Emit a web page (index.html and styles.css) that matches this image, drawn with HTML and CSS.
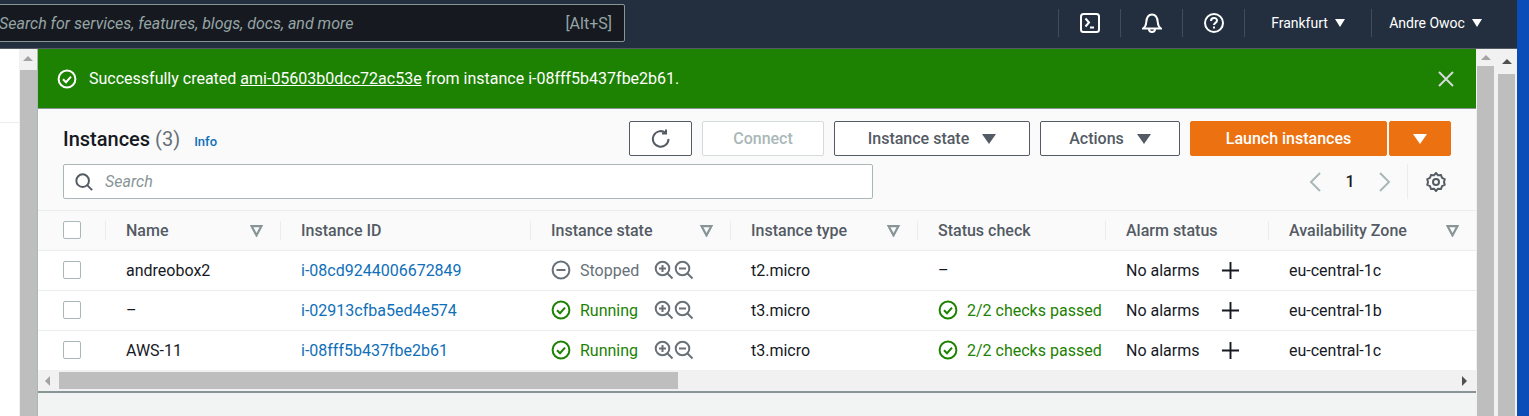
FILE: index.html
```html
<!DOCTYPE html>
<html lang="en">
<head>
    <meta charset="UTF-8">
    <title>Instances</title>
    <link rel="stylesheet" href="styles.css">
</head>
<body>
    <svg class="sprite" width="0" height="0">
        <symbol id="i-check" viewBox="0 0 20 20"><circle cx="10" cy="10" r="8.4" fill="none" stroke="currentColor" stroke-width="2"/><path d="M6 10.3l3 2.9 5-5.6" fill="none" stroke="currentColor" stroke-width="2"/></symbol>
        <symbol id="i-stop" viewBox="0 0 20 20"><circle cx="10" cy="10" r="8.4" fill="none" stroke="currentColor" stroke-width="2"/><path d="M5.5 10h9" fill="none" stroke="currentColor" stroke-width="2"/></symbol>
        <symbol id="i-zoomin" viewBox="0 0 20 20"><circle cx="8.5" cy="8.5" r="6.8" fill="none" stroke="currentColor" stroke-width="2"/><path d="M13.5 13.5l5 5M5 8.5h7M8.5 5v7" fill="none" stroke="currentColor" stroke-width="2"/></symbol>
        <symbol id="i-zoomout" viewBox="0 0 20 20"><circle cx="8.5" cy="8.5" r="6.8" fill="none" stroke="currentColor" stroke-width="2"/><path d="M13.5 13.5l5 5M5 8.5h7" fill="none" stroke="currentColor" stroke-width="2"/></symbol>
        <symbol id="i-plus" viewBox="0 0 20 20"><path d="M10 1v18M1 10h18" fill="none" stroke="currentColor" stroke-width="2"/></symbol>
        <symbol id="i-sort" viewBox="0 0 12 12"><path d="M1.5 2h9L6 10.5z" fill="none" stroke="currentColor" stroke-width="2"/></symbol>
    </svg>

    <div class="app">
        <header class="topbar">
            <div class="global-search">
                <span class="global-search-text">Search for services, features, blogs, docs, and more</span>
                <span class="global-search-key">[Alt+S]</span>
            </div>
            <div class="topbar-item topbar-icon">
                <svg width="20" height="20" viewBox="0 0 20 20" fill="none" stroke="#fff" stroke-width="2"><rect x="1" y="1" width="18" height="18" rx="2.5"/><path d="M5.5 5.5l3.5 4-3.5 4M10 14.500h4"/></svg>
            </div>
            <div class="topbar-item topbar-icon">
                <svg width="20" height="20" viewBox="0 0 20 20" fill="none" stroke="#fff" stroke-width="2"><path d="M1 15.500c2.500-1.500 3-3 3.200-6C4.500 5 6.500 1.500 10 1.500s5.500 3.500 5.800 8c.2 3 .7 4.500 3.200 6z"/><path d="M7 16c0 4 6 4 6 0"/></svg>
            </div>
            <div class="topbar-item topbar-icon">
                <svg width="20" height="20" viewBox="0 0 20 20" fill="none" stroke="#fff" stroke-width="2"><circle cx="10" cy="10" r="9"/><path d="M7 8c0-4 6-4 6-.500 0 2.500-3 2.200-3 4.500"/><path d="M10 13.500v2"/></svg>
            </div>
            <div class="topbar-item topbar-menu region">Frankfurt <span class="caret-small"></span></div>
            <div class="topbar-item topbar-menu user">Andre Owoc <span class="caret-small"></span></div>
        </header>

        <div class="main">
            <nav class="leftnav"><div class="leftnav-line"></div></nav>
            <div class="vscroll vscroll-left"><span class="arrow-up"></span><div class="thumb"></div></div>

            <section class="panel">
                <div class="banner">
                    <svg class="banner-icon"><use href="#i-check"/></svg>
                    <span class="banner-text">Successfully created <a href="#">ami-05603b0dcc72ac53e</a> from instance i-08fff5b437fbe2b61.</span>
                    <svg class="banner-close" viewBox="0 0 16 16" fill="none" stroke="currentColor" stroke-width="2"><path d="M1 1l14 14M15 1L1 15"/></svg>
                </div>

                <div class="toolbar">
                    <div class="toolbar-row">
                        <h1 class="title">Instances <span class="count">(3)</span></h1>
                        <a class="info" href="#">Info</a>
                        <div class="actions">
                            <button class="btn btn-icon">
                                <svg width="20" height="20" viewBox="0 0 20 20" fill="none" stroke="#545b64" stroke-width="2"><path d="M17.500 10a7.800 7.800 0 1 1-3-6.200"/><path d="M15 .500v4h-4"/></svg>
                            </button>
                            <button class="btn btn-disabled">Connect</button>
                            <button class="btn btn-state">Instance state <span class="caret"></span></button>
                            <button class="btn btn-actions">Actions <span class="caret"></span></button>
                            <div class="split">
                                <button class="btn btn-primary">Launch instances</button>
                                <button class="btn btn-primary btn-more"><span class="caret caret-white"></span></button>
                            </div>
                        </div>
                    </div>
                    <div class="toolbar-row">
                        <div class="search">
                            <svg width="18" height="18" viewBox="0 0 20 20" fill="none" stroke="#545b64" stroke-width="2.200"><circle cx="8.500" cy="8.500" r="7"/><path d="M13.500 13.500l5.500 5.500"/></svg>
                            <span class="search-text">Search</span>
                        </div>
                        <div class="pager">
                            <svg class="pager-arrow" viewBox="0 0 14 22" fill="none" stroke="currentColor" stroke-width="2"><path d="M12 2L3 11l9 9"/></svg>
                            <span class="pager-num">1</span>
                            <svg class="pager-arrow" viewBox="0 0 14 22" fill="none" stroke="currentColor" stroke-width="2"><path d="M2 2l9 9-9 9"/></svg>
                            <div class="pager-gear">
                                <svg width="20" height="20" viewBox="0 0 20 20" fill="none" stroke="#545b64" stroke-width="2"><path d="M10 1l2 2.300 3-.3 1 2.800 2.700 1.400-.7 2.800.7 2.800L16 14.200 15 17l-3-.3L10 19l-2-2.300-3 .3-1-2.800-2.700-1.400.7-2.800-.7-2.800L4 5.800 5 3l3 .3z"/><circle cx="10" cy="10" r="3"/></svg>
                            </div>
                        </div>
                    </div>
                </div>

                <table class="instances">
                    <colgroup>
                        <col class="col-check"><col class="col-name"><col class="col-id"><col class="col-state">
                        <col class="col-type"><col class="col-status"><col class="col-alarm"><col class="col-az">
                    </colgroup>
                    <thead>
                        <tr>
                            <th class="cell-check"><span class="checkbox"></span></th>
                            <th><div class="th-inner">Name <svg class="sort"><use href="#i-sort"/></svg></div></th>
                            <th><div class="th-inner">Instance ID</div></th>
                            <th><div class="th-inner">Instance state <svg class="sort"><use href="#i-sort"/></svg></div></th>
                            <th><div class="th-inner">Instance type <svg class="sort"><use href="#i-sort"/></svg></div></th>
                            <th><div class="th-inner">Status check</div></th>
                            <th><div class="th-inner">Alarm status</div></th>
                            <th><div class="th-inner">Availability Zone <svg class="sort"><use href="#i-sort"/></svg></div></th>
                        </tr>
                    </thead>
                    <tbody>
                        <tr>
                            <td class="cell-check"><span class="checkbox"></span></td>
                            <td>andreobox2</td>
                            <td><a href="#">i-08cd9244006672849</a></td>
                            <td><div class="state"><svg class="status-icon stopped"><use href="#i-stop"/></svg><span class="stopped state-label">Stopped</span><svg class="zoom"><use href="#i-zoomin"/></svg><svg class="zoom"><use href="#i-zoomout"/></svg></div></td>
                            <td>t2.micro</td>
                            <td>–</td>
                            <td><div class="alarm">No alarms <svg class="plus"><use href="#i-plus"/></svg></div></td>
                            <td>eu-central-1c</td>
                        </tr>
                        <tr>
                            <td class="cell-check"><span class="checkbox"></span></td>
                            <td>–</td>
                            <td><a href="#">i-02913cfba5ed4e574</a></td>
                            <td><div class="state"><svg class="status-icon ok"><use href="#i-check"/></svg><span class="ok state-label">Running</span><svg class="zoom"><use href="#i-zoomin"/></svg><svg class="zoom"><use href="#i-zoomout"/></svg></div></td>
                            <td>t3.micro</td>
                            <td><div class="check"><svg class="status-icon ok"><use href="#i-check"/></svg><span class="ok">2/2 checks passed</span></div></td>
                            <td><div class="alarm">No alarms <svg class="plus"><use href="#i-plus"/></svg></div></td>
                            <td>eu-central-1b</td>
                        </tr>
                        <tr>
                            <td class="cell-check"><span class="checkbox"></span></td>
                            <td>AWS-11</td>
                            <td><a href="#">i-08fff5b437fbe2b61</a></td>
                            <td><div class="state"><svg class="status-icon ok"><use href="#i-check"/></svg><span class="ok state-label">Running</span><svg class="zoom"><use href="#i-zoomin"/></svg><svg class="zoom"><use href="#i-zoomout"/></svg></div></td>
                            <td>t3.micro</td>
                            <td><div class="check"><svg class="status-icon ok"><use href="#i-check"/></svg><span class="ok">2/2 checks passed</span></div></td>
                            <td><div class="alarm">No alarms <svg class="plus"><use href="#i-plus"/></svg></div></td>
                            <td>eu-central-1c</td>
                        </tr>
                    </tbody>
                </table>

                <div class="hscroll">
                    <span class="arrow-left"></span>
                    <div class="hthumb"></div>
                    <span class="arrow-right"></span>
                </div>
                <div class="panel-foot"></div>
            </section>

            <div class="vscroll vscroll-panel"><span class="arrow-up"></span><div class="thumb"></div></div>
            <div class="vscroll vscroll-page"><span class="arrow-up arrow-dark"></span><div class="thumb"></div></div>
        </div>
    </div>
    <div class="desktop"></div>
</body>
</html>
```

FILE: styles.css
```css
* {
    box-sizing: border-box;
}
html, body {
    height: 100%;
}
body {
    display: flex;
    margin: 0;
    overflow: hidden;
    font-family: "Roboto", "Liberation Sans", sans-serif;
    font-size: 16px;
    color: #16191f;
    background-color: #0b4db8;
}
a {
    color: #0f6fb9;
    text-decoration: none;
}
.sprite {
    display: block;
    flex: none;
}
.app {
    display: flex;
    flex-direction: column;
    width: 1517px;
    flex: none;
    overflow: hidden;
}
.desktop {
    flex: 1;
}

/* top bar */
.topbar {
    display: flex;
    align-items: center;
    height: 49px;
    flex: none;
    padding: 0 22px 2px 0;
    background-color: #232f3e;
    border-bottom: 1px solid #545b64;
}
.global-search {
    display: flex;
    align-items: center;
    justify-content: space-between;
    width: 635px;
    height: 38px;
    margin-left: -10px;
    margin-right: 433px;
    padding: 0 12px 0 8px;
    background-color: #16191f;
    border: 1px solid #879596;
    border-radius: 2px;
    color: #95a5a6;
    white-space: nowrap;
}
.global-search-text {
    font-style: italic;
}
.topbar-item {
    display: flex;
    align-items: center;
    justify-content: center;
    height: 28px;
    color: #fff;
    font-size: 14px;
    white-space: nowrap;
    border-left: 1px solid #414d5c;
}
.topbar-icon {
    width: 62px;
}
.topbar-icon:first-of-type {
    border-left: none;
}
.region {
    width: 127px;
    gap: 7px;
}
.user {
    flex: 1;
    gap: 7px;
    padding-left: 4px;
}
.caret-small {
    width: 0;
    height: 0;
    border-left: 5.500px solid transparent;
    border-right: 5.500px solid transparent;
    border-top: 8px solid #fff;
}

/* side parts */
.main {
    display: flex;
    flex: 1;
    min-height: 0;
}
.leftnav {
    width: 19px;
    flex: none;
    padding-top: 73px;
    background-color: #fff;
}
.leftnav-line {
    height: 1px;
    background-color: #eaeded;
}
.vscroll {
    display: flex;
    flex-direction: column;
    align-items: center;
    flex: none;
    background-color: #f1f1f1;
}
.thumb {
    flex: 1;
    width: 17px;
    background-color: #bebebe;
}
.arrow-up {
    width: 0;
    height: 0;
    border-left: 5px solid transparent;
    border-right: 5px solid transparent;
    border-bottom: 5px solid #a3a3a3;
}
.arrow-dark {
    border-bottom-color: #505050;
}
.vscroll-left {
    width: 18px;
    padding-top: 7px;
}
.vscroll-left .thumb {
    margin-top: 9px;
}
.vscroll-panel {
    width: 20px;
    padding-top: 6px;
    padding-right: 1px;
}
.vscroll-panel .thumb {
    margin-top: 6px;
}
.vscroll-page {
    width: 21px;
    padding-top: 10px;
}
.vscroll-page .thumb {
    margin-top: 10px;
}

/* panel */
.panel {
    display: flex;
    flex-direction: column;
    width: 1439px;
    flex: none;
    background-color: #fafafa;
    border-left: 1px solid #aab7b8;
}
.banner {
    display: flex;
    align-items: center;
    height: 60px;
    flex: none;
    padding: 0 22px 0 19px;
    color: #fff;
    background-color: #1d8102;
    border-bottom: 1px solid #879596;
}
.banner-icon {
    width: 20px;
    height: 20px;
    margin-right: 12px;
}
.banner-text a {
    color: #fff;
    text-decoration: underline;
}
.banner-close {
    width: 16px;
    height: 16px;
    margin-left: auto;
    color: #d5dbdb;
}
.toolbar {
    display: flex;
    flex-direction: column;
    gap: 8px;
    height: 102px;
    flex: none;
    padding: 12px 25px 0 25px;
    border-bottom: 1px solid #eaeded;
}
.toolbar-row {
    display: flex;
    align-items: center;
    height: 35px;
}
.title {
    margin: 0;
    font-size: 20px;
    font-weight: 500;
}
.count {
    font-weight: 400;
    color: #687078;
}
.info {
    margin-left: 14px;
    margin-top: 5px;
    font-size: 13px;
    font-weight: 500;
}
.actions {
    display: flex;
    gap: 10px;
    margin-left: auto;
}
.btn {
    display: flex;
    align-items: center;
    justify-content: center;
    height: 35px;
    padding: 0;
    font-family: inherit;
    font-size: 16px;
    font-weight: 500;
    color: #545b64;
    background-color: #fff;
    border: 1px solid #545b64;
    border-radius: 2px;
}
.btn-icon {
    width: 63px;
}
.btn-disabled {
    width: 122px;
    color: #aab7b8;
    border-color: #d5dbdb;
}
.btn-state {
    width: 196px;
    gap: 13px;
}
.btn-actions {
    width: 140px;
    gap: 13px;
}
.caret {
    width: 0;
    height: 0;
    border-left: 7px solid transparent;
    border-right: 7px solid transparent;
    border-top: 10px solid #545b64;
}
.caret-white {
    border-top-color: #fff;
}
.split {
    display: flex;
    gap: 2px;
}
.btn-primary {
    color: #fff;
    background-color: #ec7211;
    border-color: #ec7211;
}
.split .btn-primary {
    width: 197px;
}
.split .btn-more {
    width: 62px;
}
.search {
    display: flex;
    align-items: center;
    gap: 12px;
    width: 810px;
    height: 35px;
    padding-left: 11px;
    background-color: #fff;
    border: 1px solid #aab7b8;
    border-radius: 2px;
}
.search-text {
    font-style: italic;
    color: #879596;
}
.pager {
    display: flex;
    align-items: center;
    height: 35px;
    margin-left: auto;
}
.pager-arrow {
    width: 14px;
    height: 22px;
    color: #aab7b8;
}
.pager-num {
    width: 56px;
    text-align: center;
    font-weight: 500;
}
.pager-gear {
    display: flex;
    align-items: center;
    height: 35px;
    margin-left: 15px;
    padding-left: 18px;
    padding-right: 5px;
    border-left: 1px solid #eaeded;
}

/* table */
.instances {
    width: 1438px;
    flex: none;
    table-layout: fixed;
    border-collapse: collapse;
    background-color: #fff;
}
.col-check { width: 67px; }
.col-name { width: 175px; }
.col-id { width: 250px; }
.col-state { width: 200px; }
.col-type { width: 187px; }
.col-status { width: 188px; }
.col-alarm { width: 163px; }
.col-az { width: 208px; }
.instances th {
    height: 39px;
    padding: 0;
    text-align: left;
    font-weight: 500;
    color: #545b64;
    background-color: #fafafa;
    border-bottom: 1px solid #eaeded;
}
.th-inner {
    display: flex;
    align-items: center;
    justify-content: space-between;
    height: 19px;
    padding: 0 17px 0 20px;
    border-left: 1px solid #eaeded;
    white-space: nowrap;
}
.instances td {
    height: 40px;
    padding: 0 0 0 21px;
    white-space: nowrap;
    overflow: hidden;
    border-bottom: 1px solid #eaeded;
}
.instances tbody tr:last-child td {
    border-bottom: none;
}
.instances .cell-check {
    padding-left: 25px;
}
.checkbox {
    display: block;
    width: 18px;
    height: 18px;
    background-color: #fff;
    border: 1px solid #aab7b8;
    border-radius: 2px;
}
.sort {
    width: 13px;
    height: 13px;
    color: #879596;
}
.state, .check, .alarm {
    display: flex;
    align-items: center;
}
.status-icon {
    width: 20px;
    height: 20px;
    flex: none;
    margin-right: 9px;
}
.ok {
    color: #1d8102;
}
.stopped {
    color: #687078;
}
.state-label {
    width: 74px;
}
.zoom {
    width: 20px;
    height: 20px;
    color: #687078;
}
.plus {
    width: 19px;
    height: 19px;
    margin-left: 21px;
    color: #16191f;
}

/* horizontal scrollbar */
.hscroll {
    display: flex;
    align-items: center;
    height: 21px;
    flex: none;
    padding: 0 9px 0 7px;
    background-color: #f1f1f1;
}
.hthumb {
    width: 619px;
    height: 17px;
    margin-left: 9px;
    background-color: #bebebe;
}
.arrow-left {
    width: 0;
    height: 0;
    border-top: 5px solid transparent;
    border-bottom: 5px solid transparent;
    border-right: 5px solid #a3a3a3;
}
.arrow-right {
    width: 0;
    height: 0;
    margin-left: auto;
    border-top: 5px solid transparent;
    border-bottom: 5px solid transparent;
    border-left: 5px solid #505050;
}
.panel-foot {
    flex: 1;
    background-color: #f2f3f3;
    border-top: 2px solid #879596;
}
```
